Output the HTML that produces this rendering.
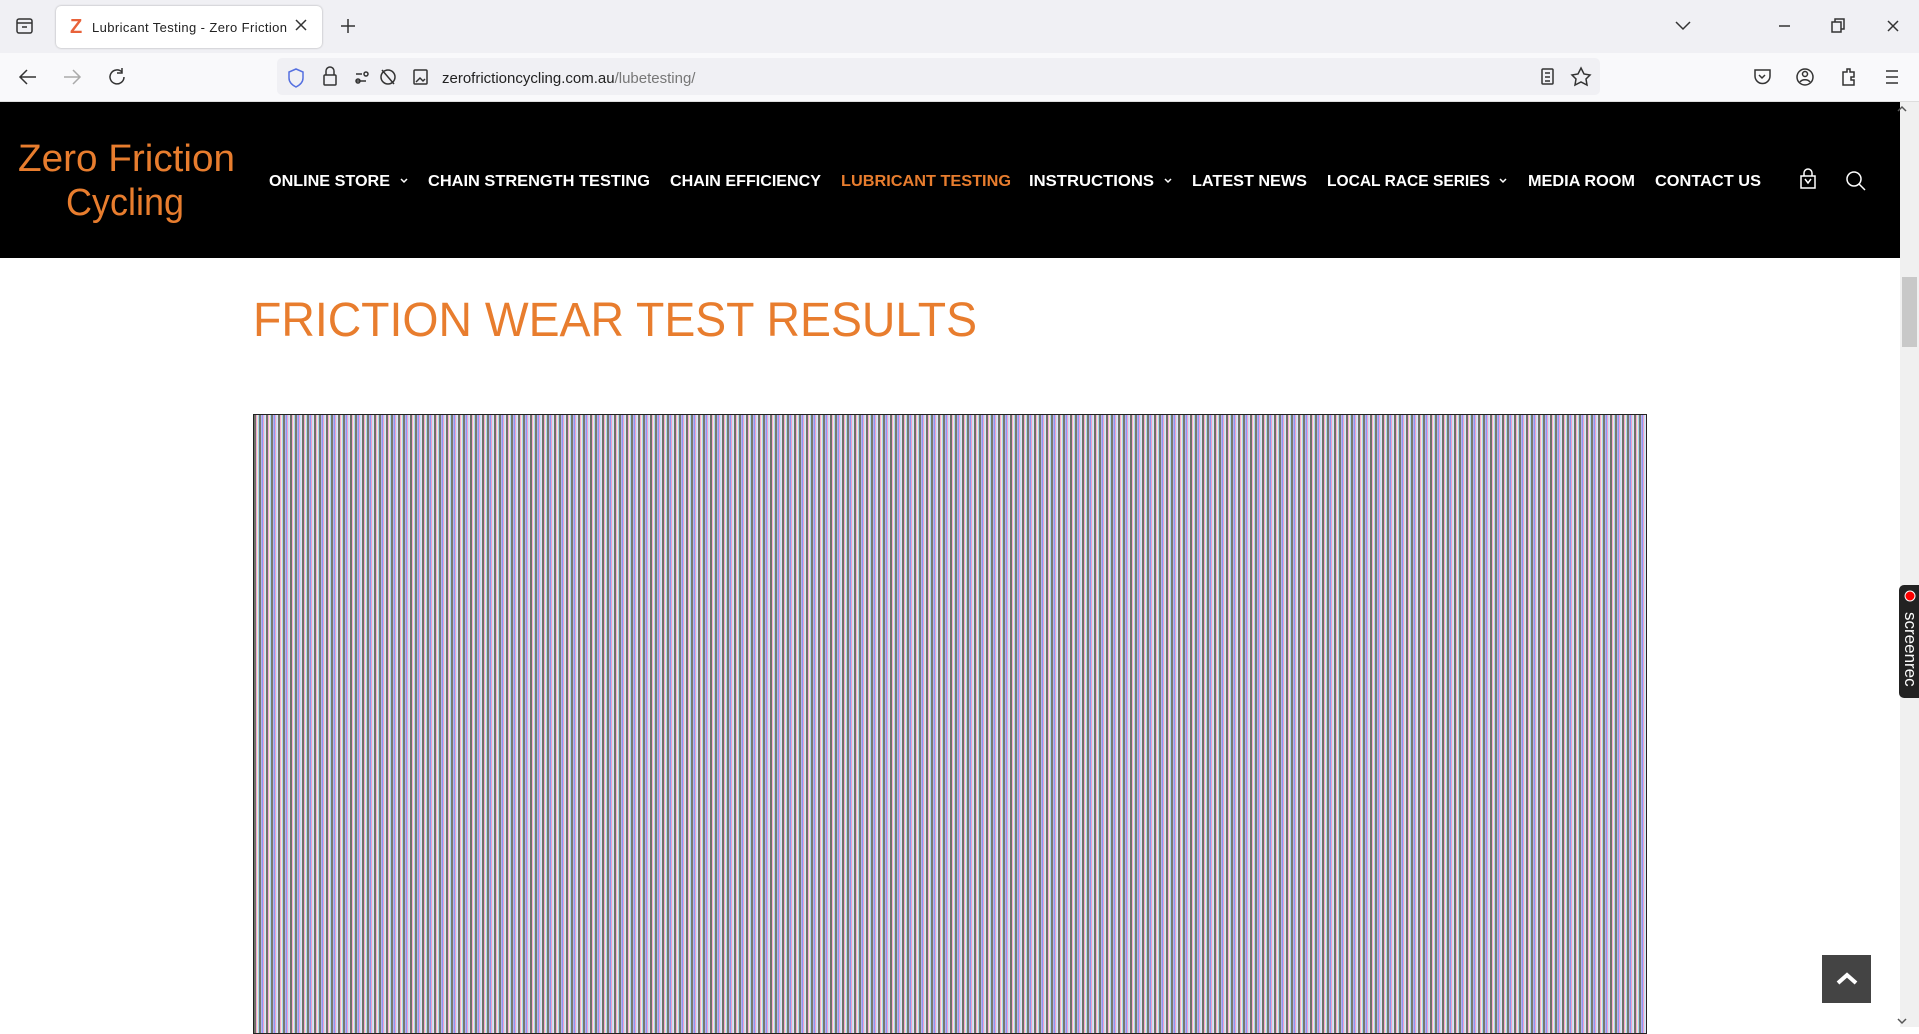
<!DOCTYPE html>
<html><head><meta charset="utf-8">
<style>
html,body{margin:0;padding:0;width:1919px;height:1027px;overflow:hidden;background:#fff;font-family:"Liberation Sans",sans-serif;}
.abs{position:absolute}
#tabbar{left:0;top:0;width:1919px;height:53px;background:#f0f0f4}
#tab{left:56px;top:6px;width:266px;height:42px;background:#fff;border-radius:5px;box-shadow:0 0 2px rgba(0,0,0,.3)}
#navbar{left:0;top:53px;width:1919px;height:48px;background:#f9f9fb;border-bottom:1px solid #ddd}
#url{left:277px;top:58px;width:1323px;height:37px;background:#f0f0f4;border-radius:5px}
#header{left:0;top:102px;width:1900px;height:156px;background:#000}
#scroll{left:1900px;top:102px;width:19px;height:925px;background:#f0f0f0}
#thumb{left:1902px;top:277px;width:15px;height:70px;background:#c8c8c8}
#chart{left:253px;top:414px;width:1394px;height:620px;border:1px solid #222;box-sizing:border-box;
background:repeating-linear-gradient(90deg,#6e7268 0 2px,#f0a8d8 2px 3px,#f4ecd0 3px 4px,#a8d4f0 4px 5px,#767a70 5px 7px,#b4b0f0 7px 8px,#8c98f0 8px 9px,#f0a0cc 9px 10px,#c0e4f4 10px 11px,#e8e0f0 11px 12px)}
#totop{left:1822px;top:955px;width:49px;height:48px;background:#444}
#rec{left:1899px;top:585px;width:20px;height:113px;background:#222;border-radius:5px 0 0 5px}
</style></head><body>
<div id="tabbar" class="abs"></div>
<div id="tab" class="abs"></div>
<div id="navbar" class="abs"></div>
<div id="url" class="abs"></div>
<div id="header" class="abs"></div>
<div id="scroll" class="abs"></div>
<div id="thumb" class="abs"></div>
<div id="chart" class="abs"></div>
<div id="totop" class="abs"></div>
<div id="rec" class="abs"></div>
<svg class="abs" style="left:0;top:0" width="1919" height="1027" xmlns="http://www.w3.org/2000/svg">
<g fill="none" stroke="#333" stroke-width="1.5">
 <rect x="17" y="19" width="15" height="14" rx="2"/><path d="M17 23h15M22 27h5"/>
 <path d="M296 20l10 10M306 20l-10 10" transform="translate(0,0)"/>
 <path d="M341 26h14M348 19v14"/>
 <path d="M1676 22l7 7 7-7"/>
 <path d="M1779 26h11"/>
 <rect x="1832" y="22" width="9" height="10"/><path d="M1835 22v-3h9v10h-3"/>
 <path d="M1888 21l10 10M1898 21l-10 10"/>
 <path d="M36 77H20M27 70l-7 7 7 7"/>
 <path d="M80 77H64M73 70l7 7-7 7" stroke="#aaa"/>
 <path d="M122 72a7 7 0 1 0 2 5M122 68v5h-5"/>
 <path d="M296 69l7 3v6c0 4-3 7-7 9-4-2-7-5-7-9v-6z" stroke="#5570e0"/>
 <rect x="324" y="75" width="12" height="10" rx="1"/><path d="M326 75v-4a4 4 0 0 1 8 0v4"/>
 <path d="M356 74h6M356 81h10" /><circle cx="366" cy="74" r="2"/><circle cx="358" cy="81" r="2"/>
 <circle cx="388" cy="77" r="7"/><path d="M382 70l12 14"/>
 <rect x="414" y="70" width="13" height="14" rx="1"/><path d="M416 82l4-4 3 3 2-2"/>
 <rect x="1542" y="69" width="11" height="15" rx="1"/><path d="M1545 73h5M1545 77h5M1545 81h5"/>
 <path d="M1581 68l3 6 6 1-4 4 1 6-6-3-6 3 1-6-4-4 6-1z"/>
 <path d="M1755 70h15v6a7.5 7.5 0 0 1-15 0z"/><path d="M1759 75l3 3 3-3"/>
 <circle cx="1805" cy="77" r="8"/><circle cx="1805" cy="74" r="2.5"/><path d="M1800 82c2-3 8-3 10 0"/>
 <path d="M1843 72h4v-3h3v3h4v5h-3v3h3v5h-11z"/>
 <path d="M1886 71h12M1886 77h12M1886 83h12"/>
</g>
<text x="92" y="32" font-family="Liberation Sans" font-size="13" fill="#222" textLength="195">Lubricant Testing - Zero Friction</text>
<text x="70" y="33" font-family="Liberation Sans" font-size="20" font-weight="bold" fill="#e8623a">Z</text>
<text x="442" y="83" font-family="Liberation Sans" font-size="15" fill="#222">zerofrictioncycling.com.au<tspan fill="#777">/lubetesting/</tspan></text>
<!-- logo -->
<text x="18" y="171" font-family="Liberation Sans" font-size="38" fill="#e87d2e" textLength="217" lengthAdjust="spacingAndGlyphs">Zero Friction</text>
<text x="66" y="215" font-family="Liberation Sans" font-size="38" fill="#e87d2e" textLength="118" lengthAdjust="spacingAndGlyphs">Cycling</text>
<!-- nav -->
<g font-family="Liberation Sans" font-size="16" font-weight="bold" fill="#fff">
<text x="269" y="186" textLength="121" lengthAdjust="spacingAndGlyphs">ONLINE STORE</text>
<text x="428" y="186" textLength="222" lengthAdjust="spacingAndGlyphs">CHAIN STRENGTH TESTING</text>
<text x="670" y="186" textLength="151" lengthAdjust="spacingAndGlyphs">CHAIN EFFICIENCY</text>
<text x="841" y="186" textLength="170" lengthAdjust="spacingAndGlyphs" fill="#e87d2e">LUBRICANT TESTING</text>
<text x="1029" y="186" textLength="125" lengthAdjust="spacingAndGlyphs">INSTRUCTIONS</text>
<text x="1192" y="186" textLength="115" lengthAdjust="spacingAndGlyphs">LATEST NEWS</text>
<text x="1327" y="186" textLength="163" lengthAdjust="spacingAndGlyphs">LOCAL RACE SERIES</text>
<text x="1528" y="186" textLength="107" lengthAdjust="spacingAndGlyphs">MEDIA ROOM</text>
<text x="1655" y="186" textLength="106" lengthAdjust="spacingAndGlyphs">CONTACT US</text>
</g>
<g fill="none" stroke="#fff" stroke-width="1.5">
<path d="M401 179l3 3 3-3M1165 179l3 3 3-3M1500 179l3 3 3-3"/>
<rect x="1801" y="176" width="14" height="12"/><path d="M1804 176v-3a4 4 0 0 1 8 0v3M1805 179l3 4 3-4"/>
<circle cx="1854" cy="179" r="7"/><path d="M1859 184l6 6"/>
<path d="M1898 111l4-4 4 4" stroke="#555"/>
<path d="M1898 1019l4 4 4-4" stroke="#555"/>
<path d="M1838 983l9-8 9 8" stroke-width="4"/>
</g>
<text x="1905" y="612" font-family="Liberation Sans" font-size="17" fill="#fff" transform="rotate(90 1905 612)">screenrec</text>
<circle cx="1910" cy="596" r="5" fill="#f00" stroke="#fff" stroke-width="1"/>
<!-- title -->
<text x="253" y="336" font-family="Liberation Sans" font-size="48" fill="#e87d2e" textLength="724" lengthAdjust="spacingAndGlyphs">FRICTION WEAR TEST RESULTS</text>
</svg>
</body></html>
